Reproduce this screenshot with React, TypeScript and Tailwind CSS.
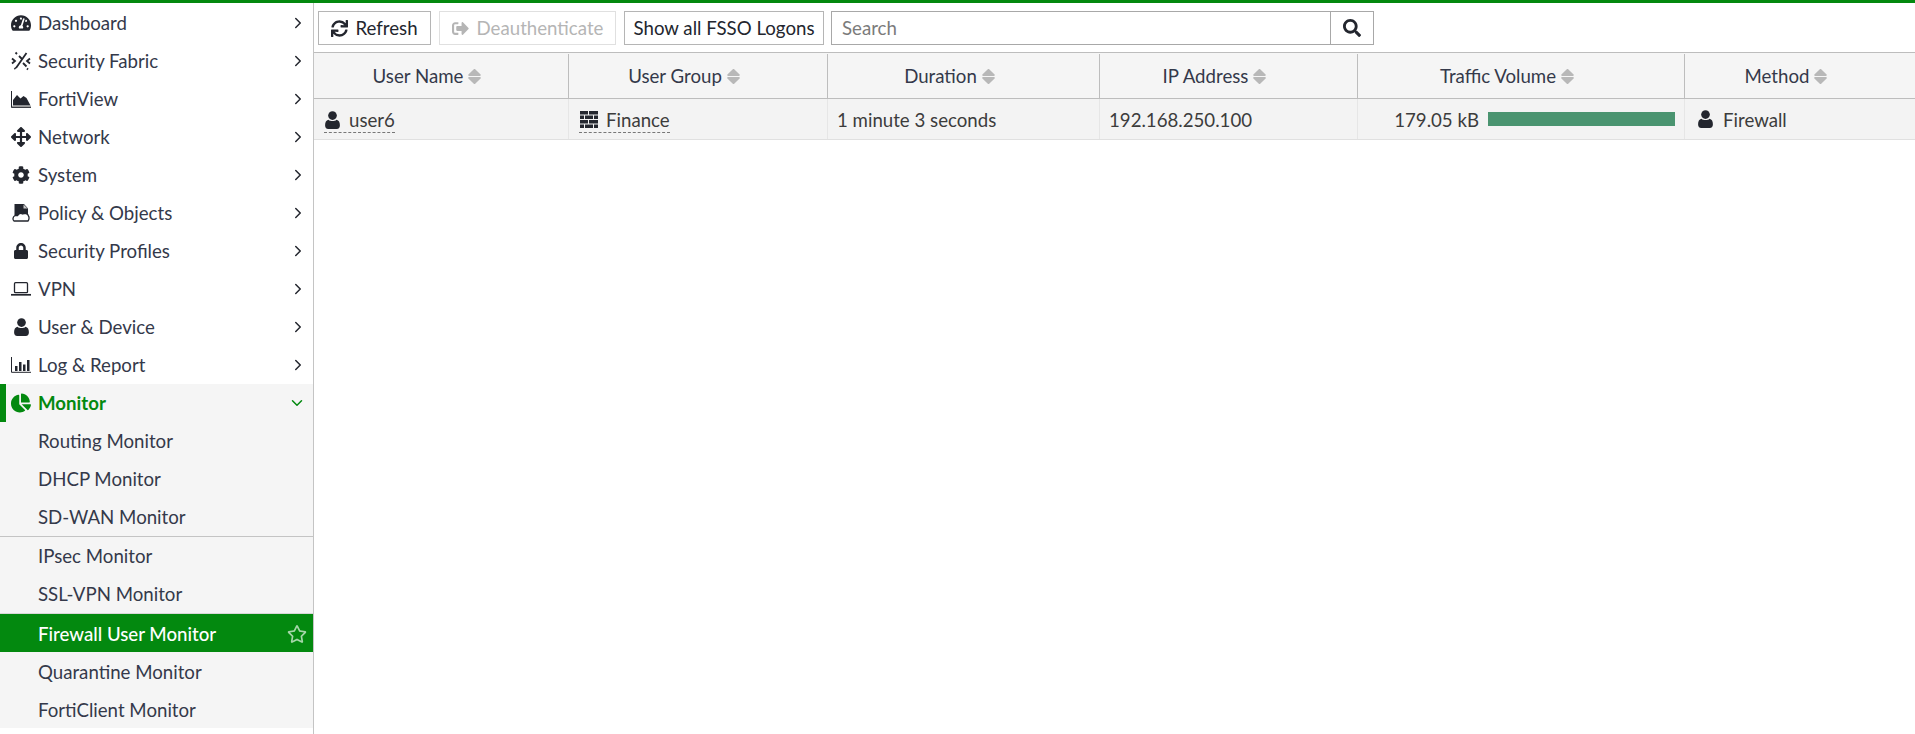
import React from 'react';
import {
  FaTachometerAlt,
  FaArrowsAlt,
  FaCog,
  FaLock,
  FaChartPie,
  FaSync,
  FaSearch,
  FaSignOutAlt,
  FaRegStar,
} from 'react-icons/fa';
import { LuChevronRight, LuChevronDown } from 'react-icons/lu';

const FabricIcon = () => (
  <svg viewBox="0 0 20 20" className="w-5 h-5" fill="none" stroke="currentColor" strokeWidth="1.800">
    <path d="M4.500 1.500l1.500 1.500M8 5l3 3M12 12l3.500 3.500M15.500 2L5 17M1 7.500l3 2.500-3 2.500M19 7.500l-3 2.500 3 2.500M3.500 17l1 1M16 17.500l1 1" />
  </svg>
);

const AreaIcon = () => (
  <svg viewBox="0 0 20 17" className="w-5 h-[17px]">
    <path d="M.5 0v16.500H20" fill="none" stroke="currentColor" strokeWidth="1" />
    <path d="M2 14.500V9l4-5 3.500 3.500 3-2.500 3 2 4 7.500z" fill="currentColor" />
    <path d="M1 15.500h19" stroke="#9a9a9a" strokeWidth="1.400" />
  </svg>
);

const PolicyIcon = () => (
  <svg viewBox="0 0 18 18" className="w-[18px] h-[18px]">
    <path d="M2.500 0h9.500l4 4.500V11H2.500z" fill="currentColor" />
    <path d="M11.500.5v4h4" fill="#c9c9c9" />
    <path d="M3 11.500h2.500c1.500-2 3.500-2.500 5-1.500 2-1 5.500-.5 6 2 .8 1 .8 3.500-.5 5H2c-1.500-1-1.500-4 1-5.500z" fill="#ffffff" stroke="currentColor" strokeWidth="1.300" />
  </svg>
);

const LaptopIcon = () => (
  <svg viewBox="0 0 20 14" className="w-5 h-[14px]" fill="none" stroke="currentColor">
    <rect x="3.500" y=".7" width="13" height="10" rx="1" strokeWidth="1.300" />
    <path d="M0 12.800h20" strokeWidth="1.700" />
  </svg>
);

const UserIcon = () => (
  <svg viewBox="0 0 14 17" className="w-[15px] h-[18px]" fill="currentColor">
    <circle cx="7" cy="4.300" r="4.100" />
    <path d="M3.200 8.200C5 10 9 10 10.800 8.200 13 8.700 14 10.500 14 13.500c0 2-1 3.500-3 3.500H3c-2 0-3-1.500-3-3.500 0-3 1-4.800 3.200-5.300z" />
  </svg>
);

const ChartIcon = () => (
  <svg viewBox="0 0 20 16" className="w-5 h-4">
    <path d="M.5 0v15.300H20" fill="none" stroke="currentColor" strokeWidth="1" />
    <path d="M4 9h2.500v5H4zM8 5h2.500v9H8zM12 7.500h2.500V14H12zM16 3h2.500v11H16z" fill="currentColor" />
  </svg>
);

const WallIcon = () => (
  <svg viewBox="0 0 18 17" className="w-[18px] h-[17px]" fill="currentColor">
    <path d="M0 0h8v3.500H0zM9 0h9v3.500H9zM0 4.500h4V8H0zM5 4.500h8V8H5zM14 4.500h4V8h-4zM0 9h8v3.500H0zM9 9h9v3.500H9zM0 13.500h4V17H0zM5 13.500h8V17H5zM14 13.500h4V17h-4z" />
  </svg>
);

const SortIcon = () => (
  <svg viewBox="0 0 13 15" className="w-[13px] h-[15px] ml-[5px] shrink-0" fill="#b8b8b8">
    <path d="M6.500 0c.3 0 .5.100.7.300l5.400 5.200c.5.500.2 1.500-.6 1.500H1c-.8 0-1.100-1-.6-1.500L5.800.3c.2-.2.400-.3.700-.3z" />
    <path d="M6.500 15c.3 0 .5-.1.700-.3l5.400-5.200c.5-.5.200-1.500-.6-1.500H1c-.8 0-1.100 1-.6 1.500l5.400 5.200c.2.200.4.300.7.300z" />
  </svg>
);

const topItems: { label: string; icon: React.ReactNode }[] = [
  { label: 'Dashboard', icon: <FaTachometerAlt size={20} /> },
  { label: 'Security Fabric', icon: <FabricIcon /> },
  { label: 'FortiView', icon: <AreaIcon /> },
  { label: 'Network', icon: <FaArrowsAlt size={20} /> },
  { label: 'System', icon: <FaCog size={18} /> },
  { label: 'Policy & Objects', icon: <PolicyIcon /> },
  { label: 'Security Profiles', icon: <FaLock size={16} /> },
  { label: 'VPN', icon: <LaptopIcon /> },
  { label: 'User & Device', icon: <UserIcon /> },
  { label: 'Log & Report', icon: <ChartIcon /> },
];

const columns = [
  { label: 'User Name', width: 'w-[255px]' },
  { label: 'User Group', width: 'w-[259px]' },
  { label: 'Duration', width: 'w-[272px]' },
  { label: 'IP Address', width: 'w-[258px]' },
  { label: 'Traffic Volume', width: 'w-[327px]' },
  { label: 'Method', width: 'flex-1' },
];

const SubItem = ({ label, lower }: { label: string; lower?: boolean }) => (
  <div className={lower ? 'h-[38px] flex items-center pl-[38px] pt-[2px]' : 'h-[38px] flex items-center pl-[38px]'}>{label}</div>
);

const App: React.FC = () => {
  return (
    <div className="h-[734px] w-[1915px] overflow-hidden bg-white text-[18.67px] text-[#34394a] font-['Lato','Noto_Sans',sans-serif]">
      <div className="h-[3px] bg-[#03890f]" />
      <div className="flex h-[731px]">
        <aside className="w-[314px] border-r border-[#c4c4c4] pt-px shrink-0">
          {topItems.map((item) => (
            <div key={item.label} className="h-[38px] flex items-center">
              <span className="w-[38px] flex justify-center pl-[4px] text-[#23262e]">{item.icon}</span>
              <span className="flex-1">{item.label}</span>
              <LuChevronRight size={18} className="mr-[6px] text-[#23262e]" />
            </div>
          ))}
          <div className="bg-[#f5f5f5]">
            <div className="h-[38px] flex items-center border-l-[6px] border-[#03890f] text-[#03890f] font-bold">
              <span className="w-[32px] flex justify-center pr-[2px]"><FaChartPie size={20} /></span>
              <span className="flex-1">Monitor</span>
              <LuChevronDown size={18} className="mr-[7px]" />
            </div>
            <SubItem label="Routing Monitor" />
            <SubItem label="DHCP Monitor" />
            <SubItem label="SD-WAN Monitor" />
            <div className="h-px bg-[#c4c4c4]" />
            <SubItem label="IPsec Monitor" />
            <SubItem label="SSL-VPN Monitor" />
            <div className="h-px bg-[#d8d8d8]" />
            <div className="h-[38px] flex items-center pl-[38px] pt-px bg-[#03890f] text-white font-medium">
              <span className="flex-1">Firewall User Monitor</span>
              <FaRegStar size={20} className="mr-[6px] text-[#a5d6a9]" />
            </div>
            <SubItem label="Quarantine Monitor" lower />
            <SubItem label="FortiClient Monitor" lower />
          </div>
        </aside>
        <main className="flex-1 min-w-0">
          <div className="h-[50px] flex items-start gap-2 pt-[8px] pl-[4px] border-b border-[#bdbdbd]">
            <button className="h-[34px] w-[113px] border border-[#b5b5b5] flex items-center justify-center gap-[7px] text-[#23262e]">
              <FaSync size={17} />
              Refresh
            </button>
            <button className="h-[34px] w-[177px] border border-[#e0e0e0] flex items-center justify-center gap-[8px] text-[#b5b5b5]">
              <FaSignOutAlt size={17} />
              Deauthenticate
            </button>
            <button className="h-[34px] w-[200px] border border-[#b5b5b5] text-[#23262e]">Show all FSSO Logons</button>
            <div className="h-[34px] w-[543px] ml-[-1px] border border-[#a8a8a8] flex items-center">
              <span className="flex-1 pl-[10px] text-[#7b7b7b]">Search</span>
              <span className="w-[43px] h-full border-l border-[#a8a8a8] flex items-center justify-center text-[#23262e]">
                <FaSearch size={18} />
              </span>
            </div>
          </div>
          <div className="flex h-[46px] bg-[#f5f5f5] border-b border-[#bdbdbd]">
            {columns.map((col) => (
              <div key={col.label} className={`${col.width} mt-px pr-[28px] flex items-center justify-center border-r border-[#bdbdbd] last:border-r-0`}>
                {col.label}
                <SortIcon />
              </div>
            ))}
          </div>
          <div className="flex h-[41px] bg-[#f3f3f3] border-b border-[#e0e0e0] text-[#3c3c3c]">
            <div className="w-[255px] border-r border-[#e6e6e6] flex items-center pl-[10px]">
              <span className="flex items-center gap-[9px] border-b border-dashed border-[#777] h-[27px] pt-[2px]">
                <span className="ml-px text-[#23262e]"><UserIcon /></span>
                user6
              </span>
            </div>
            <div className="w-[259px] border-r border-[#e6e6e6] flex items-center pl-[10px]">
              <span className="flex items-center gap-[8px] border-b border-dashed border-[#777] h-[27px] pt-[2px]">
                <span className="ml-px text-[#23262e]"><WallIcon /></span>
                Finance
              </span>
            </div>
            <div className="w-[272px] border-r border-[#e6e6e6] flex items-center pl-[9px] pt-[2px]">1 minute 3 seconds</div>
            <div className="w-[258px] border-r border-[#e6e6e6] flex items-center pl-[9px] pt-[2px]">192.168.250.100</div>
            <div className="w-[327px] border-r border-[#e6e6e6] flex items-center justify-end pr-[9px] gap-[9px]">
              <span className="pt-[2px]">179.05 kB</span>
              <div className="w-[187px] h-[14px] bg-[#4a9470]" />
            </div>
            <div className="flex-1 flex items-center pl-[13px] gap-[10px]">
              <span className="text-[#23262e]"><UserIcon /></span>
              <span className="pt-[2px]">Firewall</span>
            </div>
          </div>
        </main>
      </div>
    </div>
  );
};

export default App;
